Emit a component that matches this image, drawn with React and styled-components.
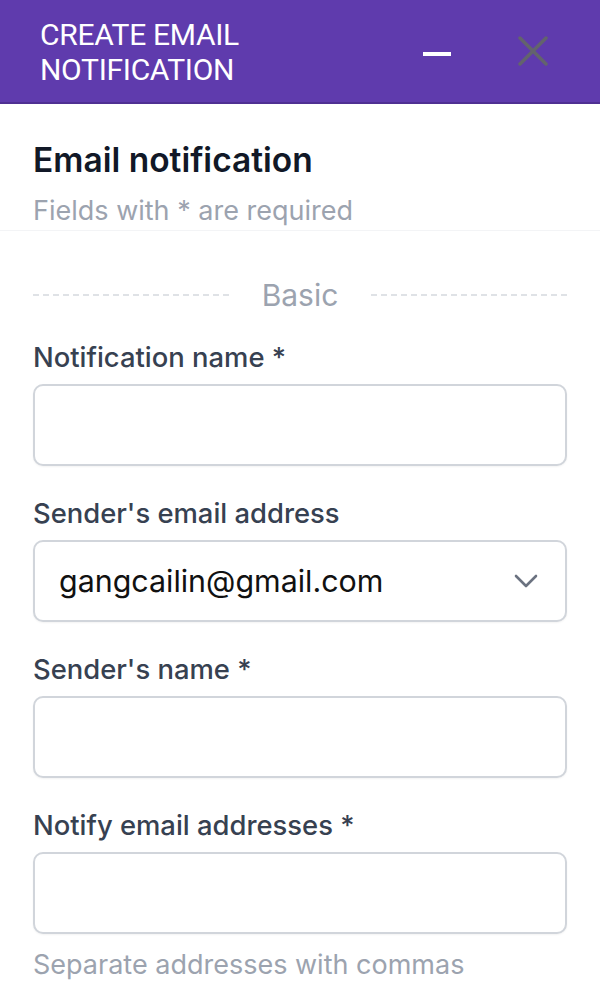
import React, { useState } from "react";
import styled, { createGlobalStyle } from "styled-components";

const GlobalStyle = createGlobalStyle`
  * { box-sizing: border-box; }
  body {
    margin: 0;
    background: #fff;
    font-family: Inter, "Noto Sans", sans-serif;
  }
`;

const fields = [
  { name: "notificationName", label: "Notification name *" },
  { name: "senderEmail", label: "Sender's email address", select: true },
  { name: "senderName", label: "Sender's name *" },
  { name: "notifyEmails", label: "Notify email addresses *", hint: "Separate addresses with commas" },
];

const App = () => {
  const [form, setForm] = useState({
    notificationName: "",
    senderEmail: "gangcailin@gmail.com",
    senderName: "",
    notifyEmails: "",
  });

  const onChangeHandler = (event) => {
    const { name, value } = event.target;
    setForm({ ...form, [name]: value });
  };

  return (
    <Panel>
      <GlobalStyle />
      <Header>
        <HeaderTitle>
          CREATE EMAIL
          <br />
          NOTIFICATION
        </HeaderTitle>
        <HeaderActions>
          <IconButton aria-label="Minimize">
            <MinimizeBar />
          </IconButton>
          <IconButton aria-label="Close">
            <svg width="30" height="30" viewBox="0 0 30 30">
              <path
                d="M2 2 L28 28 M28 2 L2 28"
                stroke="#63636d"
                strokeWidth="3.5"
                strokeLinecap="round"
              />
            </svg>
          </IconButton>
        </HeaderActions>
      </Header>

      <Intro>
        <IntroTitle>Email notification</IntroTitle>
        <IntroText>Fields with * are required</IntroText>
      </Intro>

      <Form onSubmit={(e) => e.preventDefault()}>
        <Divider>
          <DividerLine />
          <DividerText>Basic</DividerText>
          <DividerLine />
        </Divider>

        {fields.map((field) => (
          <Field key={field.name}>
            <Label htmlFor={field.name}>{field.label}</Label>
            {field.select ? (
              <SelectWrap>
                <Select
                  id={field.name}
                  name={field.name}
                  value={form[field.name]}
                  onChange={onChangeHandler}
                >
                  <option value="gangcailin@gmail.com">gangcailin@gmail.com</option>
                </Select>
                <Chevron width="24" height="14" viewBox="0 0 24 14">
                  <path
                    d="M2 2 L12 12 L22 2"
                    fill="none"
                    stroke="#6b7280"
                    strokeWidth="2.6"
                    strokeLinecap="round"
                    strokeLinejoin="round"
                  />
                </Chevron>
              </SelectWrap>
            ) : (
              <Input
                id={field.name}
                type="text"
                name={field.name}
                value={form[field.name]}
                onChange={onChangeHandler}
              />
            )}
            {field.hint && <Hint>{field.hint}</Hint>}
          </Field>
        ))}
      </Form>
    </Panel>
  );
};

export default App;

const Panel = styled.div`
  width: 600px;
  min-height: 996px;
  background: #fff;
`;

const Header = styled.header`
  height: 104px;
  background-color: #5f3bad;
  border-bottom: 2px solid #4f3092;
  display: flex;
  align-items: center;
  justify-content: space-between;
  padding: 0 52px 0 40px;
`;

const HeaderTitle = styled.h1`
  margin: 0;
  padding-top: 2px;
  font-family: Roboto, "Liberation Sans", sans-serif;
  font-weight: 400;
  font-size: 30px;
  line-height: 35px;
  letter-spacing: -0.3px;
  color: #fff;
`;

const HeaderActions = styled.div`
  display: flex;
  align-items: center;
  gap: 66px;
`;

const IconButton = styled.button`
  border: none;
  background: none;
  padding: 0;
  width: 30px;
  height: 30px;
  display: flex;
  align-items: center;
  justify-content: center;
  cursor: pointer;
`;

const MinimizeBar = styled.span`
  display: block;
  width: 28px;
  height: 4px;
  background: #fff;
  margin-top: 6px;
`;

const Intro = styled.div`
  padding: 38px 33px 4px;
  border-bottom: 1px solid #f3f4f6;
`;

const IntroTitle = styled.h2`
  margin: 0;
  font-size: 33.5px;
  line-height: 36px;
  font-weight: 600;
  color: #111827;
`;

const IntroText = styled.p`
  margin: 18px 0 0;
  font-size: 27px;
  line-height: 30px;
  color: #9ca3af;
`;

const Form = styled.form`
  padding: 46px 33px 0;
  display: flex;
  flex-direction: column;
`;

const Divider = styled.div`
  display: flex;
  align-items: center;
  gap: 33px;
  margin-bottom: 28px;
`;

const DividerLine = styled.span`
  flex: 1;
  height: 2px;
  background: repeating-linear-gradient(
    to right,
    #dfe2e6 0 6px,
    transparent 6px 10px
  );
`;

const DividerText = styled.span`
  font-size: 30px;
  line-height: 36px;
  color: #9ca3af;
`;

const Field = styled.div`
  display: flex;
  flex-direction: column;
  margin-bottom: 31px;
`;

const Label = styled.label`
  font-size: 27.4px;
  line-height: 32px;
  font-weight: 500;
  color: #374151;
  margin-bottom: 11px;
`;

const Input = styled.input`
  height: 82px;
  width: 100%;
  border: 2px solid #d1d5db;
  border-radius: 10px;
  padding: 0 24px;
  font-size: 30px;
  font-family: inherit;
  box-shadow: 0 1px 2px rgba(0, 0, 0, 0.05);
  outline: none;
`;

const SelectWrap = styled.div`
  position: relative;
`;

const Select = styled.select`
  appearance: none;
  height: 82px;
  width: 100%;
  border: 2px solid #d1d5db;
  border-radius: 10px;
  padding: 0 24px;
  font-size: 30.4px;
  font-family: inherit;
  color: #111;
  background: #fff;
  box-shadow: 0 1px 2px rgba(0, 0, 0, 0.05);
  outline: none;
`;

const Chevron = styled.svg`
  position: absolute;
  right: 29px;
  top: 34px;
  pointer-events: none;
`;

const Hint = styled.p`
  margin: 15px 0 0;
  font-size: 27px;
  line-height: 32px;
  color: #9ca3af;
`;
